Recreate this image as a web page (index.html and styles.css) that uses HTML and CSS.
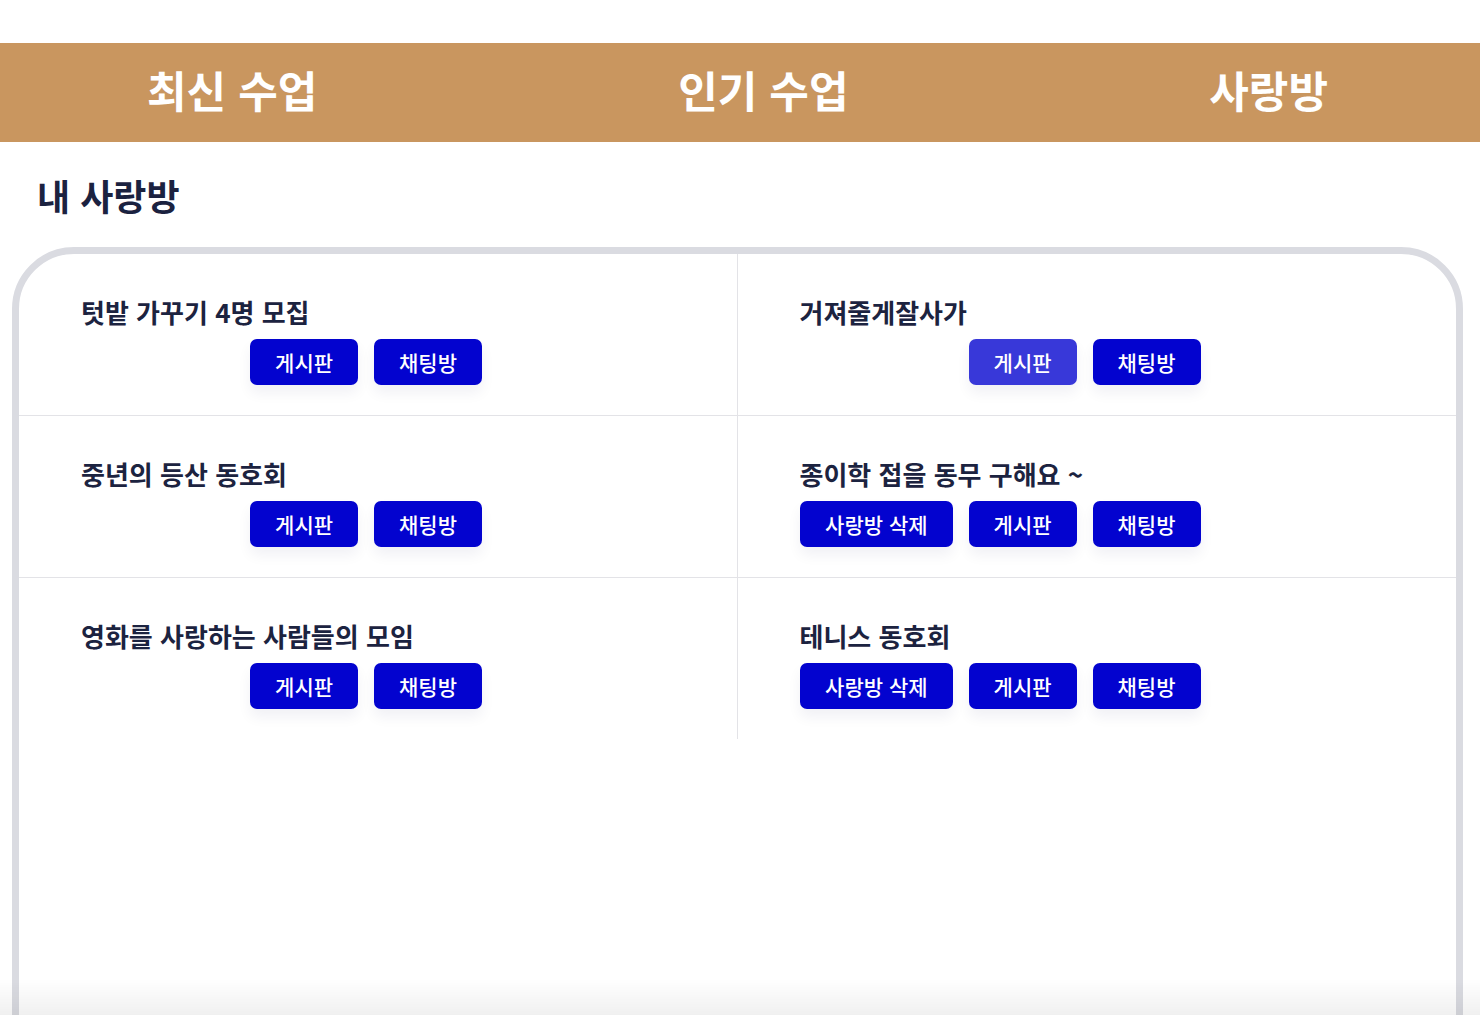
FILE: index.html
```html
<!DOCTYPE html>
<html lang="ko">
<head>
<meta charset="utf-8">
<title>내 사랑방</title>
<link rel="stylesheet" href="styles.css">
</head>
<body>
<nav class="nav">
  <a class="nav-item">최신 수업</a>
  <a class="nav-item">인기 수업</a>
  <a class="nav-item">사랑방</a>
</nav>
<h1 class="page-title">내 사랑방</h1>
<section class="card">
  <div class="grid">
    <div class="cell">
      <div class="cell-inner">
        <h2 class="room-title">텃밭 가꾸기 4명 모집</h2>
        <div class="actions">
          <button class="btn">게시판</button>
          <button class="btn">채팅방</button>
        </div>
      </div>
    </div>
    <div class="cell">
      <div class="cell-inner">
        <h2 class="room-title">거져줄게잘사가</h2>
        <div class="actions">
          <button class="btn btn-hover">게시판</button>
          <button class="btn">채팅방</button>
        </div>
      </div>
    </div>
    <div class="cell">
      <div class="cell-inner">
        <h2 class="room-title">중년의 등산 동호회</h2>
        <div class="actions">
          <button class="btn">게시판</button>
          <button class="btn">채팅방</button>
        </div>
      </div>
    </div>
    <div class="cell">
      <div class="cell-inner">
        <h2 class="room-title">종이학 접을 동무 구해요 ~</h2>
        <div class="actions">
          <button class="btn">사랑방 삭제</button>
          <button class="btn">게시판</button>
          <button class="btn">채팅방</button>
        </div>
      </div>
    </div>
    <div class="cell last">
      <div class="cell-inner">
        <h2 class="room-title">영화를 사랑하는 사람들의 모임</h2>
        <div class="actions">
          <button class="btn">게시판</button>
          <button class="btn">채팅방</button>
        </div>
      </div>
    </div>
    <div class="cell last">
      <div class="cell-inner">
        <h2 class="room-title">테니스 동호회</h2>
        <div class="actions">
          <button class="btn">사랑방 삭제</button>
          <button class="btn">게시판</button>
          <button class="btn">채팅방</button>
        </div>
      </div>
    </div>
  </div>
</section>
<div class="bottom-fade"></div>
</body>
</html>
```
FILE: styles.css
```css
html {
  overflow: hidden;
}
body {
  margin: 0;
  background: #ffffff;
  font-family: "Noto Sans CJK KR", "Noto Sans", sans-serif;
  color: #1c2340;
}
.nav {
  margin-top: 43px;
  height: 99px;
  box-sizing: border-box;
  background: #c9965f;
  display: flex;
  align-items: center;
  justify-content: space-between;
  padding: 0 152px 7px 147px;
}
.nav-item {
  color: #ffffff;
  font-size: 43px;
  font-weight: 700;
  cursor: pointer;
}
.page-title {
  margin: 30px 0 29px 37px;
  font-size: 36px;
  line-height: 46px;
  font-weight: 700;
  color: #1b2240;
}
.card {
  margin-left: 12px;
  width: 1437px;
  height: 820px;
  border: 7px solid #dadbe1;
  border-radius: 62px;
  box-sizing: content-box;
}
.grid {
  display: grid;
  grid-template-columns: 1fr 1fr;
}
.cell {
  padding: 41px 62px 30px;
  border-bottom: 1px solid #e3e3e7;
}
.cell:nth-child(odd) {
  border-right: 1px solid #e3e3e7;
}
.cell.last {
  border-bottom: none;
}
.cell-inner {
  width: 401px;
}
.room-title {
  margin: 0;
  font-size: 26px;
  line-height: 34px;
  font-weight: 700;
  color: #1c2340;
}
.actions {
  margin-top: 10px;
  display: flex;
  justify-content: flex-end;
  gap: 16px;
}
.btn {
  height: 46px;
  padding: 0 25px;
  border: none;
  border-radius: 7px;
  background: #0303cf;
  color: #ffffff;
  font-family: "Noto Sans CJK KR", "Noto Sans", sans-serif;
  font-size: 21px;
  font-weight: 500;
  box-shadow: 0 8px 14px rgba(20, 20, 80, 0.06);
  cursor: pointer;
}
.btn-hover {
  background: #3838d9;
}
.bottom-fade {
  position: fixed;
  left: 0;
  right: 0;
  bottom: 0;
  height: 36px;
  background: linear-gradient(rgba(0, 0, 0, 0), rgba(0, 0, 0, 0.06));
  pointer-events: none;
}
```
